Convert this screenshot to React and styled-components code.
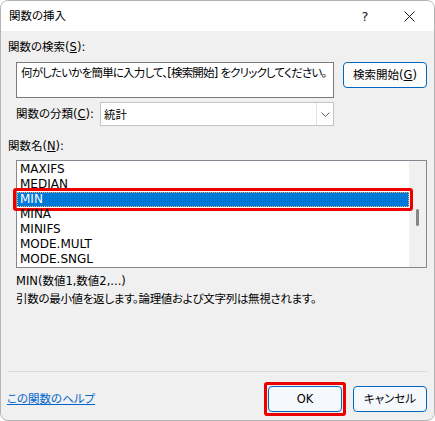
import React from "react";
import styled, { createGlobalStyle } from "styled-components";

const GlobalStyle = createGlobalStyle`
  html, body {
    margin: 0;
    padding: 0;
    background: #ffffff;
  }
  body {
    font-family: "DejaVu Sans", "Noto Sans CJK JP", sans-serif;
    font-size: 11.5px;
    color: #000;
    font-feature-settings: "palt";
  }
  * {
    box-sizing: border-box;
  }
`;

const Dialog = styled.div`
  width: 435px;
  height: 421px;
  display: flex;
  flex-direction: column;
  background: #f0f0f0;
  border: 1px solid #b4b4b4;
  border-radius: 8px;
  overflow: hidden;
`;

const TitleBar = styled.div`
  height: 30px;
  flex-shrink: 0;
  display: flex;
  align-items: center;
  background: #ffffff;
  padding: 0 3px 0 8px;
`;

const Title = styled.div`
  flex: 1;
  line-height: 16px;
`;

const TitleButton = styled.div`
  width: 44px;
  height: 30px;
  display: flex;
  align-items: center;
  justify-content: center;
  font-size: 13px;
  color: #1a1a1a;
`;

const Body = styled.div`
  flex: 1;
  display: flex;
  flex-direction: column;
  padding: 8px 7px 8px 7px;
`;

const Label = styled.div`
  line-height: 16px;
  margin-top: ${(p) => p.$top || 0}px;
`;

const SearchRow = styled.div`
  display: flex;
  align-items: flex-start;
  gap: 9px;
  margin: 7px 0 0 8px;
`;

const SearchBox = styled.div`
  width: 318px;
  height: 36px;
  border: 1px solid #7a7a7a;
  background: #fff;
  padding: 2px 3px 2px 4px;
  line-height: 16px;
  letter-spacing: -0.8px;
  white-space: nowrap;
  overflow: hidden;
`;

const Button = styled.div`
  position: relative;
  width: ${(p) => p.$width}px;
  height: ${(p) => p.$height}px;
  display: flex;
  align-items: center;
  justify-content: center;
  background: ${(p) => p.$bg || "#fdfdfd"};
  border: 1px solid #0067c0;
  border-radius: 4px;
  line-height: 16px;

  ${(p) =>
    p.$marked &&
    `
    &::after {
      content: "";
      position: absolute;
      inset: -5px;
      border: 3px solid #ee0000;
      border-radius: 3px;
    }
  `}
`;

const CategoryRow = styled.div`
  display: flex;
  align-items: center;
  margin: 4px 0 0 8px;
`;

const CategoryLabel = styled.div`
  width: 84px;
  line-height: 16px;
`;

const Select = styled.div`
  width: 234px;
  height: 24px;
  display: flex;
  align-items: stretch;
  background: #fff;
  border: 1px solid #c4c4c4;
`;

const SelectValue = styled.div`
  flex: 1;
  display: flex;
  align-items: center;
  padding-left: 3px;
`;

const SelectArrow = styled.div`
  width: 17px;
  display: flex;
  align-items: center;
  justify-content: center;
  border-left: 1px solid #e3e3e3;
`;

const ListBox = styled.div`
  margin: 6px 0 0 8px;
  height: 108px;
  display: flex;
  border: 1px solid #828790;
  background: #fff;
`;

const Items = styled.div`
  flex: 1;
  padding-top: 1px;
`;

const Item = styled.div`
  position: relative;
  height: 15px;
  line-height: 15px;
  padding-left: 3px;
  font-size: 12px;
  color: ${(p) => (p.$selected ? "#fff" : "#000")};
  background: ${(p) => (p.$selected ? "#0078d7" : "transparent")};

  ${(p) =>
    p.$selected &&
    `
    outline: 1px dotted #f7b26a;
    outline-offset: -1px;
    &::after {
      content: "";
      position: absolute;
      inset: -4px -4px -4px -4px;
      border: 3px solid #ee0000;
      border-radius: 3px;
    }
  `}
`;

const ScrollTrack = styled.div`
  width: 17px;
  background: #f0f0f0;
  display: flex;
  justify-content: center;
  padding-top: 48px;
`;

const ScrollThumb = styled.div`
  width: 3px;
  height: 17px;
  border-radius: 2px;
  background: #858585;
`;

const Syntax = styled.div`
  margin: 4px 0 0 8px;
  line-height: 18px;
`;

const Description = styled.div`
  margin-left: 8px;
  line-height: 18px;
  letter-spacing: -0.3px;
`;

const Separator = styled.div`
  margin-top: auto;
  height: 1px;
  background: #dcdcdc;
`;

const Footer = styled.div`
  display: flex;
  align-items: center;
  gap: 11px;
  padding-top: 14px;
`;

const HelpLink = styled.a`
  flex: 1;
  margin-left: -1px;
  color: #0066cc;
  text-decoration: underline;
  line-height: 16px;
`;

const functions = [
  "MAXIFS",
  "MEDIAN",
  "MIN",
  "MINA",
  "MINIFS",
  "MODE.MULT",
  "MODE.SNGL",
];

const CloseIcon = () => (
  <svg width="11" height="11" viewBox="0 0 11 11">
    <path d="M0.5 0.5 L10.5 10.5 M10.5 0.5 L0.5 10.5" stroke="#1a1a1a" strokeWidth="1" fill="none" />
  </svg>
);

const Chevron = () => (
  <svg width="9" height="5" viewBox="0 0 9 5">
    <path d="M0.5 0.5 L4.5 4.5 L8.5 0.5" stroke="#606060" strokeWidth="1" fill="none" />
  </svg>
);

export default function App() {
  return (
    <>
      <GlobalStyle />
      <Dialog>
        <TitleBar>
          <Title>関数の挿入</Title>
          <TitleButton>?</TitleButton>
          <TitleButton>
            <CloseIcon />
          </TitleButton>
        </TitleBar>
        <Body>
          <Label>
            関数の検索(<u>S</u>):
          </Label>
          <SearchRow>
            <SearchBox>何がしたいかを簡単に入力して、[検索開始] をクリックしてください。</SearchBox>
            <Button $width={84} $height={26}>
              検索開始(<u>G</u>)
            </Button>
          </SearchRow>
          <CategoryRow>
            <CategoryLabel>
              関数の分類(<u>C</u>):
            </CategoryLabel>
            <Select>
              <SelectValue>統計</SelectValue>
              <SelectArrow>
                <Chevron />
              </SelectArrow>
            </Select>
          </CategoryRow>
          <Label $top={12}>
            関数名(<u>N</u>):
          </Label>
          <ListBox>
            <Items>
              {functions.map((name) => (
                <Item key={name} $selected={name === "MIN"}>
                  {name}
                </Item>
              ))}
            </Items>
            <ScrollTrack>
              <ScrollThumb />
            </ScrollTrack>
          </ListBox>
          <Syntax>MIN(数値1,数値2,...)</Syntax>
          <Description>引数の最小値を返します。論理値および文字列は無視されます。</Description>
          <Separator />
          <Footer>
            <HelpLink>この関数のヘルプ</HelpLink>
            <Button $width={74} $height={26} $bg="#f5f9fd" $marked>
              OK
            </Button>
            <Button $width={74} $height={26} $bg="#f5f9fd">
              キャンセル
            </Button>
          </Footer>
        </Body>
      </Dialog>
    </>
  );
}
